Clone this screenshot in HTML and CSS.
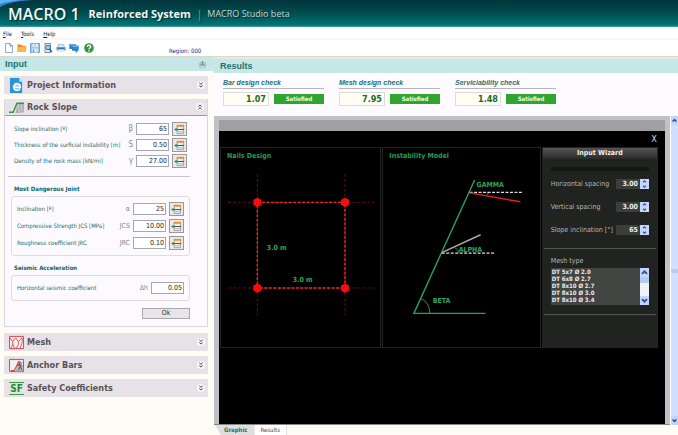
FILE: index.html
```html
<!DOCTYPE html>
<html lang="en">
<head>
<meta charset="utf-8">
<title>MACRO 1 Reinforced System</title>
<link rel="stylesheet" href="styles.css">
</head>
<body>
<svg class="defs" aria-hidden="true">
  <symbol id="down" viewBox="0 0 8 8"><circle cx="4" cy="4" r="4" fill="#faf8fa"/><path d="M2.3 1.8 4 3.4 5.7 1.8M2.3 4.5 4 6.1 5.7 4.5" fill="none" stroke="#444" stroke-width="1"/></symbol>
  <symbol id="up" viewBox="0 0 8 8"><circle cx="4" cy="4" r="4" fill="#faf8fa"/><path d="M2.3 3.5 4 1.9 5.7 3.5M2.3 6.2 4 4.6 5.7 6.2" fill="none" stroke="#444" stroke-width="1"/></symbol>
  <symbol id="pick" viewBox="0 0 12 12"><path d="M3.500 1.500h7v9h-7z" fill="#f4f4f0" stroke="#8a8a86" stroke-width=".8"/><path d="M3 1h8v2H3z" fill="#f08a2c"/><path d="M4 8.500h6" stroke="#aaa"/><path d="M3 6h8" stroke="#4d5a55" stroke-width="1.200"/><path d="M0 6 3 4v4z" fill="#17877b"/></symbol>
  <symbol id="arrow-up" viewBox="0 0 8 8"><path d="M1.800 5.200 4 3l2.200 2.200" fill="none" stroke="#35508c" stroke-width="1.800"/></symbol>
  <symbol id="arrow-down" viewBox="0 0 8 8"><path d="M1.800 2.800 4 5l2.200-2.200" fill="none" stroke="#35508c" stroke-width="1.800"/></symbol>
</svg>

<header class="banner">
  <svg class="swoosh" viewBox="0 0 34 8" aria-hidden="true"><path d="M0 0h34C20 .5 8 2.500 0 7z" fill="#2f86d8"/><path d="M0 0h22C14 .5 6 2 0 4z" fill="#5fb0f4"/></svg>
  <h1>MACRO 1</h1><span class="system">Reinforced System</span><span class="bar">|</span><span class="edition">MACRO Studio beta</span>
</header>

<nav class="menu"><a href="#file"><u>F</u>ile</a><a href="#tools"><u>T</u>ools</a><a href="#help"><u>H</u>elp</a></nav>

<div class="toolbar">
  <button aria-label="New"><svg viewBox="0 0 10 10"><path d="M1.500.5h4.500l2.500 2.500v6.500h-7z" fill="#fbfdff" stroke="#8aa0bd" stroke-width=".9"/><path d="M6 .5v2.500h2.500" fill="#d4e1f0" stroke="#55729c" stroke-width=".8"/></svg></button>
  <button aria-label="Open"><svg viewBox="0 0 10 10"><path d="M.5 1.500h3.500l1 1.200h3.500V9h-8z" fill="#e88a1a"/><path d="M1 3.800h8.800L8.800 9H.5z" fill="#fbb650"/></svg></button>
  <button aria-label="Save"><svg viewBox="0 0 10 10"><path d="M.5.5h9v9h-9z" fill="#9cc9ee" stroke="#6a9bcb" stroke-width=".9"/><path d="M2.500.8h5v3h-5z" fill="#edf6fd"/><path d="M2.200 5.500h5.600v4H2.200z" fill="#d4e8f8"/><path d="M3.500 6.500v2.500M5 1.500v1.500" stroke="#5f8bb5"/></svg></button>
  <button aria-label="Preview"><svg viewBox="0 0 10 10"><path d="M1.500 0h6.500v10H1.500z" fill="#7392b4"/><path d="M2.500 1h4.500v8H2.500z" fill="#dcebf7"/><circle cx="5" cy="4.500" r="2.200" fill="#a5dafb" stroke="#33587f" stroke-width=".9"/><path d="m6.500 6.200 2.500 2.800" stroke="#33587f" stroke-width="1.400"/></svg></button>
  <button aria-label="Print"><svg viewBox="0 0 10 10"><path d="M2 1.500h6v3H2z" fill="#d9ecf8" stroke="#8ab1d0" stroke-width=".7"/><path d="M.5 4h9v3.500h-9z" fill="#5f9fd2"/><path d="M2 6.500h6V9H2z" fill="#dcedf8"/><path d="M1.500 5.500h7" stroke="#3f77a8"/></svg></button>
  <button aria-label="Comment"><svg viewBox="0 0 10 10"><path d="M.3 1h6.500v5H.3zM3 2.500h6.700v5.200H8.500L8 10 5.800 7.700H3z" fill="#2c86cd"/><path d="M1 1.800h5M3.800 3.500h5" stroke="#7ac2f4"/></svg></button>
  <button class="help" aria-label="Help"><svg viewBox="0 0 10 10"><circle cx="5" cy="5" r="4.800" fill="#36963e"/><path d="M3.200 3.600C3.500 1.600 7 1.800 6.700 3.800 6.500 5 5 5 5 6.200" fill="none" stroke="#fff" stroke-width="1.400"/><path d="M4.300 7.200h1.400v1.300H4.300z" fill="#fff"/></svg></button>
  <span class="region">Region: 000</span>
</div>

<main>
  <aside>
    <div class="bar-title"><h2>Input</h2><svg class="pin" viewBox="0 0 9 9" aria-hidden="true"><circle cx="4.500" cy="5" r="3.800" fill="#b3c2c5"/><path d="M4.500 1v4M2.500 4l2 2 2-2" fill="none" stroke="#7e9094"/><path d="M3 7h3" stroke="#f5fafa"/></svg></div>
    <div class="sections">
      <button class="section"><svg class="ico" viewBox="0 0 16 16"><path d="M1 0h10l3 4v12H1z" fill="#2795d8"/><path d="m11 0 3 4h-3z" fill="#b9e1f8"/><circle cx="8.500" cy="9.500" r="4.600" fill="#d4efff" opacity=".6"/><path d="M5 9.800h7c0-5-6.500-4.500-6.700 0 0 4 5 4.200 6.200 1.700" fill="none" stroke="#fff" stroke-width="1.500"/></svg><span>Project Information</span><svg class="chev"><use href="#down"/></svg></button>
      <section class="open">
        <button class="section"><svg class="ico" viewBox="0 0 16 16"><path d="m7 14 2-10h7v9z" fill="#b2b0b2"/><path d="m10 5 1 8m2-8 1 7" stroke="#d6d3d6"/><path d="M0 13h4.500l4-9.500H16" fill="none" stroke="#3d9143" stroke-width="1.600"/></svg><span>Rock Slope</span><svg class="chev"><use href="#up"/></svg></button>
        <form class="slope">
          <div class="rows top">
            <div class="row"><label for="b">Slope inclination [º]</label><i>β</i><input id="b" value="65"><button type="button" aria-label="Select slope"><svg><use href="#pick"/></svg></button></div>
            <div class="row"><label for="s">Thickness of the surficial instability [m]</label><i>S</i><input id="s" value="0.50"><button type="button" aria-label="Select thickness"><svg><use href="#pick"/></svg></button></div>
            <div class="row"><label for="g">Density of the rock mass [kN/mi]</label><i>γ</i><input id="g" value="27.00"><button type="button" aria-label="Select density"><svg><use href="#pick"/></svg></button></div>
          </div>
          <h3>Most Dangerous Joint</h3>
          <div class="rows group">
            <div class="row"><label for="a">Inclination [º]</label><i>α</i><input id="a" value="25"><button type="button" aria-label="Select inclination"><svg><use href="#pick"/></svg></button></div>
            <div class="row"><label for="jcs">Compressive Strength JCS [MPa]</label><i>JCS</i><input id="jcs" value="10.00"><button type="button" aria-label="Select strength"><svg><use href="#pick"/></svg></button></div>
            <div class="row"><label for="jrc">Roughness coefficient JRC</label><i>JRC</i><input id="jrc" value="0.10"><button type="button" aria-label="Select roughness"><svg><use href="#pick"/></svg></button></div>
          </div>
          <h3>Seismic Acceleration</h3>
          <div class="rows group">
            <div class="row"><label for="h">Horizontal seismic coefficient</label><i>Δh</i><input id="h" value="0.05"></div>
          </div>
          <button type="button" class="ok">Ok</button>
        </form>
      </section>
      <button class="section"><svg class="ico" viewBox="0 0 16 14"><path d="M.5.5h15v13H.5z" fill="#f6edf0" stroke="#dc3b45"/><path d="M1 2 4 6v3l-2 4M4 6l3-4M7 2l3 4v3l-2 4M10 6l4-4M4 9l2 4M14 2v5l-2 6" fill="none" stroke="#dc3b45" stroke-width=".9"/></svg><span>Mesh</span><svg class="chev"><use href="#down"/></svg></button>
      <button class="section"><svg class="ico" viewBox="0 0 16 14"><path d="M.5.5h15v13H.5z" fill="#f6edf0" stroke="#dc3b45"/><path d="m7 13 2-10h5.500v10z" fill="#bcb6b9"/><path d="M2 12.500h3.500L11 2" fill="none" stroke="#dc3b45" stroke-width="1.200"/><path d="m12 3-1 3 1 2-2 4m2-4 2 4M9 7l3-1 2 2" fill="none" stroke="#50494b"/></svg><span>Anchor Bars</span><svg class="chev"><use href="#down"/></svg></button>
      <button class="section"><b class="sf">SF</b><span>Safety Coefficients</span><svg class="chev"><use href="#down"/></svg></button>
    </div>
  </aside>

  <section class="results">
    <div class="bar-title"><h2>Results</h2></div>
    <div class="checks">
      <div class="check"><label for="c1">Bar design check</label><input id="c1" value="1.07" readonly><output>Satisfied</output></div>
      <div class="check"><label for="c2">Mesh design check</label><input id="c2" value="7.95" readonly><output>Satisfied</output></div>
      <div class="check"><label for="c3">Serviciability check</label><input id="c3" value="1.48" readonly><output>Satisfied</output></div>
    </div>
    <div class="viewport">
      <div class="frame">
        <div class="stage">
          <div class="stage-top"><button aria-label="Close">X</button></div>
          <div class="panels">
            <div class="panel nails">
              <h4>Nails Design</h4>
              <svg viewBox="0 0 160 184" role="img" aria-label="Nail spacing">
                <g stroke="#7c1215" stroke-dasharray="3 2" fill="none"><path d="M7 38.500h147M7 124.500h147M36.500 10v142M124.500 10v142" stroke-width=".8"/></g>
                <path d="M36.500 38.500h88v86h-88z" fill="none" stroke="#e62a2e" stroke-width="1.400" stroke-dasharray="3 1.500"/>
                <g fill="#f80d0d"><path id="nail" d="m36.500 34 4 2v5l-4 2.500-4-2.500v-5z"/><use href="#nail" x="88"/><use href="#nail" y="86"/><use href="#nail" x="88" y="86"/></g>
                <text x="46" y="86">3.0 m</text><text x="72" y="118">3.0 m</text>
              </svg>
            </div>
            <div class="panel model">
              <h4>Instability Model</h4>
              <svg viewBox="0 0 157 184" role="img" aria-label="Slope instability angles">
                <path d="M92 16 31 150h72" fill="none" stroke="#2ba15e" stroke-width="1.400"/>
                <path d="M38 135q9 4 9 15M72 84q4 2 4 5M105 28q1 1 0 3" fill="none" stroke="#398b5d"/>
                <path d="M87 28.500h53M59 89.500h54" stroke="#ddd" stroke-width="1.200" stroke-dasharray="3 1.500"/>
                <path d="m87 29 51 9" stroke="#e5201f" stroke-width="1.500"/><path d="m59 89 39-18" stroke="#aaa" stroke-width="1.500"/>
                <text x="94" y="23">GAMMA</text><text x="76" y="88">ALPHA</text><text x="50" y="140">BETA</text>
              </svg>
            </div>
            <div class="panel wizard">
              <h5>Input Wizard</h5>
              <div class="wizard-body">
                <div class="groove"></div>
                <div class="spin"><label for="w1">Horizontal spacing</label><input id="w1" value="3.00"><span class="steps"><svg><use href="#arrow-up"/></svg><svg><use href="#arrow-down"/></svg></span></div>
                <div class="spin"><label for="w2">Vertical spacing</label><input id="w2" value="3.00"><span class="steps"><svg><use href="#arrow-up"/></svg><svg><use href="#arrow-down"/></svg></span></div>
                <div class="spin"><label for="w3">Slope inclination [°]</label><input id="w3" value="65"><span class="steps"><svg><use href="#arrow-up"/></svg><svg><use href="#arrow-down"/></svg></span></div>
                <div class="mesh">
                  <label for="mesh">Mesh type</label>
                  <div class="list"><select id="mesh" size="5"><option>DT 5x7 Ø 2.0</option><option>DT 6x8 Ø 2.7</option><option>DT 8x10 Ø 2.7</option><option>DT 8x10 Ø 3.0</option><option>DT 8x10 Ø 3.4</option></select><span class="track"><svg><use href="#arrow-up"/></svg><span class="thumb"></span><svg class="end"><use href="#arrow-down"/></svg></span></div>
                </div>
              </div>
            </div>
          </div>
        </div>
      </div>
      <div class="scroll"><svg><use href="#arrow-up"/></svg><span class="grip"></span><svg class="end"><use href="#arrow-down"/></svg></div>
    </div>
    <nav class="tabs"><a class="on" href="#graphic">Graphic</a><a href="#results">Results</a></nav>
  </section>
</main>
</body>
</html>
```

FILE: styles.css
```css
* { box-sizing: border-box; }
body {
  margin: 0; min-height: 100vh; display: flex; flex-direction: column;
  background: #fffcf6; color: #222;
  font: 6px/10px "DejaVu Sans Condensed", "DejaVu Sans", sans-serif;
}
h1, h2, h3, h4, h5 { margin: 0; }
button, input, select { font: inherit; margin: 0; padding: 0; border: 0; border-radius: 0; background: none; color: inherit; min-width: 0; }
svg { display: block; flex: none; }
.defs { position: absolute; width: 0; height: 0; }

.banner {
  position: relative; height: 27px; padding-left: 8px; display: flex; align-items: center;
  background: linear-gradient(#00333c, #004f50 50%, #007374 92%, #459d99); color: #f2f6f5;
  font-family: "Open Sans", "Noto Sans", sans-serif; text-shadow: 1px 1px 1px #002c30;
}
.swoosh { position: absolute; left: 0; top: 0; width: 34px; height: 8px; }
.banner h1 { position: relative; font-size: 16px; line-height: 26px; font-weight: 600; }
.system { margin-left: 9px; font-size: 11px; line-height: 20px; font-weight: 700; }
.bar { margin-left: 6px; font-size: 10px; color: #7aa9a8; }
.edition { margin-left: 5px; font-size: 9px; line-height: 20px; color: #c2dcdb; }

.menu { height: 13px; padding: 1px 3px; display: flex; gap: 9px; background: #fff; border-bottom: 2px solid #f7f8f7; }
.menu a { color: #222; text-decoration: none; line-height: 12px; }
.toolbar { height: 17px; padding: 0 4px; display: flex; gap: 3px; align-items: center; background: #fff; border-bottom: 1px solid #d8d8cc; }
.toolbar button { width: 10px; height: 10px; }
.toolbar svg { width: 10px; height: 10px; }
.toolbar .help { margin-left: 2px; }
.region { margin-left: 72px; align-self: flex-end; line-height: 10px; color: #24246e; }

main { flex: 1; display: grid; grid-template-columns: 213px 1fr; }
.bar-title { height: 14px; padding: 0 6px 0 5px; display: flex; align-items: center; justify-content: space-between; background: #c5e7e7; }
.bar-title h2 { font: bold 9px/14px "Liberation Sans", sans-serif; color: #1c7370; }
.pin { width: 9px; height: 9px; }

.sections { padding: 5px 5px 0 4px; display: flex; flex-direction: column; gap: 5px; }
.section { width: 100%; height: 18px; padding: 0 3px 0 5px; display: flex; align-items: center; gap: 3px; background: #e7e2e7; color: #565256; text-align: left; }
.section span { flex: 1; font-size: 9px; font-weight: bold; }
.ico { width: 15px; height: 15px; }
.chev { width: 8px; height: 8px; }
.sf { width: 15px; border: solid #3b9845; border-width: 1px 0; font-size: 10px; line-height: 11px; color: #218b2d; text-align: center; }
.open { border: solid #d5d6e0; border-width: 0 1px 1px; margin-bottom: 1px; }
.open > .section { border-bottom: 1px solid #7f9fd0; height: 17px; padding-left: 4px; }
.slope { padding: 5px 17px 7px 3px; background: #fdfaff; display: flex; flex-direction: column; }
.rows { display: flex; flex-direction: column; gap: 2px; }
.top { padding: 1px 3px 8px 6px; border-bottom: 1px solid #c9c2cb; margin-bottom: 7px; }
.row { min-height: 14px; display: flex; align-items: center; }
.row label { flex: 1; color: #216b68; white-space: nowrap; }
.row i { font-style: normal; font-size: 8px; color: #888; margin-right: 3px; }
.group .row i { font-size: 7px; }
.row input { flex: none; width: 33px; height: 12px; padding-right: 1px; background: #fff; border: 1px solid #a3a9b3; text-align: right; font-size: 7px; }
.row button { width: 15px; height: 14px; margin-left: 3px; display: grid; place-items: center; background: #ece9e6; border: 1px solid #99979a; }
.row button svg { width: 11px; height: 11px; }
.slope h3 { margin-left: 6px; font-size: 6px; line-height: 10px; color: #17625f; }
.group { margin: 2px 0 7px 3px; padding: 5px; border: 1px solid #dfdcda; border-radius: 3px; }
.group { gap: 3px; }
.ok { align-self: flex-end; width: 48px; height: 11px; background: #e7e5ea; border: 1px solid #aaa7aa; color: #333; font-size: 7px; line-height: 9px; }

.results { display: flex; flex-direction: column; border-top: 2px solid #e9e8dc; min-width: 0; }
.results .bar-title { padding-left: 7px; }
.checks { height: 43px; padding: 4px 10px; display: flex; gap: 14px; background: #fdfbff; }
.check { width: 102px; display: grid; grid-template-columns: 46px 50px; column-gap: 5px; align-content: start; align-items: center; }
.check label { grid-column: 1 / -1; border-bottom: 1px solid #bbb3c0; margin-bottom: 3px; font: italic bold 7px/11px "Liberation Sans", sans-serif; color: #24736f; }
.check input { height: 14px; padding-right: 2px; background: #fffef5; border: 1px solid #dedbd2; text-align: right; color: #176a25; font-size: 9px; font-weight: bold; }
.check output { height: 10px; background: #2fa52f; color: #e9ffe5; line-height: 10px; font-weight: bold; text-align: center; }
.viewport { flex: 1; display: flex; gap: 1px; }
.frame { flex: 1; padding: 4px 5px 0; margin-left: 1px; background: #c1c0c4; display: flex; min-width: 0; border-bottom: 1px solid #888; }
.stage { flex: 1; min-width: 0; background: #000; border-top: 11px solid #a09fa1; padding: 0 7px 0 1px; }
.stage-top { height: 16px; display: flex; justify-content: flex-end; align-items: center; }
.stage-top button { width: 8px; color: #ddd; font-size: 9px; }
.panels { display: grid; grid-template-columns: 161fr 158fr 116fr; gap: 1px; }
.panel { border: 1px solid #242424; min-width: 0; }
.panel h4 { padding: 3px 0 3px 6px; font-size: 7px; line-height: 10px; color: #2b9b55; }
.panel svg { width: 100%; }
.panel text { font-size: 7px; font-weight: bold; fill: #2ca75b; }
.wizard { background: #202320; color: #b7b7b7; font-size: 7px; }
.wizard h5 { height: 11px; background: linear-gradient(#555, #292b29); color: #eee; font-size: 7px; line-height: 11px; text-align: center; }
.wizard-body { padding: 8px 8px; }
.groove { height: 4px; margin-bottom: 8px; background: #151715; }
.spin { height: 10px; margin-bottom: 13px; display: flex; align-items: center; }
.spin label { flex: 1; white-space: nowrap; }
.spin input { width: 24px; height: 10px; padding-right: 2px; background: #3c3e3c; color: #eee; text-align: right; font-weight: bold; }
.steps { width: 9px; height: 10px; background: #c6d6fb; }
.panel .steps svg { width: 9px; height: 5px; }
.mesh { margin: 0 -7px; padding: 6px 7px 9px; border: solid #555; border-width: 1px 0; }
.mesh label { display: block; line-height: 13px; }
.list { display: flex; height: 37px; background: #434543; }
.list select { flex: 1; overflow: hidden; outline: 0; color: #eee; scrollbar-width: none; }
.list option { padding: 0 1px; min-height: 0; line-height: 7px; height: 7px; font-size: 6px; font-weight: bold; }
.track { width: 9px; display: flex; flex-direction: column; background: #f1f2f8; }
.panel .track svg { width: 9px; height: 9px; background: #c3d4fd; }
.thumb { height: 6px; background: #b6c9f6; }
.end { margin-top: auto; }
.scroll { width: 7px; display: flex; flex-direction: column; background: #d3e0fd; }
.scroll svg { width: 7px; height: 9px; background: #c2d3fa; }
.grip { height: 4px; margin-top: auto; background: #b8caf0; }
.tabs { height: 10px; padding-left: 2px; display: flex; }
.tabs a { padding: 0 6px; color: #444; text-decoration: none; background: #fff; border-right: 1px solid #ddd; line-height: 9px; }
.tabs .on { padding-left: 9px; color: #17706d; background: #dfdfdf; font-weight: bold; clip-path: polygon(0 0, 100% 0, 100% 100%, 6px 100%); }
```
